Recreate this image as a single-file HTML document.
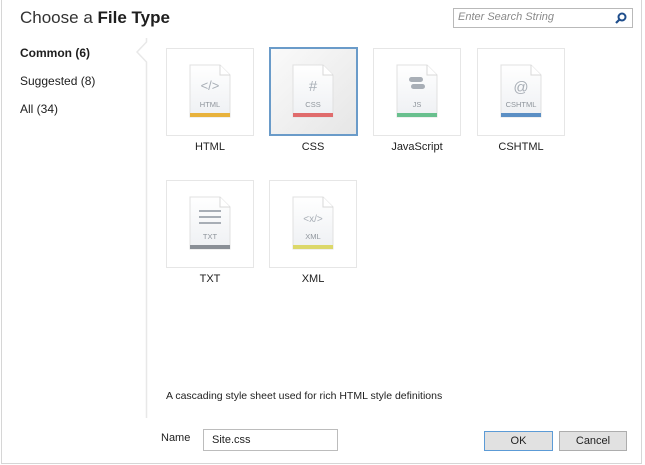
<!DOCTYPE html>
<html><head><meta charset="utf-8"><style>
*{margin:0;padding:0;box-sizing:border-box}
body{width:645px;height:465px;background:#fff;font-family:"Liberation Sans",sans-serif;color:#1e1e1e;position:relative;overflow:hidden}
.a{position:absolute}
.frame{left:1px;top:-2px;width:641px;height:466px;border:1px solid #d6d6d6}
.title{left:20px;top:8px;font-size:17px;color:#333}
.title b{color:#1e1e1e}
.nav{left:20px;font-size:12px}
.tile{width:88px;height:88px;border:1px solid #e6e6e6;background:#fff}
.tile.sel{border:2px solid #6a9bc9;background:linear-gradient(135deg,#fafafa,#e6e6e6)}
.lbl{font-size:11px;width:88px;text-align:center}
.search{left:453px;top:8px;width:180px;height:20px;border:1px solid #b9b9b9;font-size:11px;font-style:italic;color:#8a8a8a;padding:2px 4px}
.btn{height:20px;border:1px solid #adadad;background:#e1e1e1;font-size:11px;text-align:center;line-height:18px}
</style></head><body>
<div class="a frame"></div>
<div class="a title">Choose a <b>File Type</b></div>
<div class="a search">Enter Search String</div>
<svg class="a" style="left:614px;top:11px" width="14" height="14"><circle cx="8" cy="6" r="3.5" fill="none" stroke="#1f4e8c" stroke-width="2"/><line x1="5.5" y1="8.5" x2="2" y2="12" stroke="#1f4e8c" stroke-width="2.2"/></svg>
<div class="a nav" style="top:46px;font-weight:bold">Common (6)</div>
<div class="a nav" style="top:74px">Suggested (8)</div>
<div class="a nav" style="top:102px">All (34)</div>
<svg class="a" style="left:136px;top:38px" width="14" height="380"><path d="M10.5 0 L10.5 4 L1 14 L10.5 24 L10.5 380" fill="none" stroke="#e8e8e8" stroke-width="1.5"/></svg>

<div class="a tile" style="left:166px;top:48px"></div>
<div class="a tile sel" style="left:269px;top:47px;width:89px;height:89px"></div>
<div class="a tile" style="left:373px;top:48px"></div>
<div class="a tile" style="left:477px;top:48px"></div>
<div class="a tile" style="left:166px;top:180px"></div>
<div class="a tile" style="left:269px;top:180px"></div>

<svg class="a" style="left:0;top:0" width="645" height="300" font-family="Liberation Sans,sans-serif">
<defs><linearGradient id="p" x1="0" y1="0" x2="0" y2="1"><stop offset="0" stop-color="#fff"/><stop offset="1" stop-color="#eef0f3"/></linearGradient>
<g id="doc"><path d="M0 0 H30 L40 10 V52 H0 Z" fill="url(#p)" stroke="#e0e0e0"/><path d="M30 0 V10 H40" fill="#fff" stroke="#d8d8d8"/></g></defs>
<g transform="translate(190,65)"><use href="#doc"/><rect x="0" y="48" width="40" height="4" fill="#e8b23c"/><text x="20" y="25" font-size="13" fill="#a8aeb6" text-anchor="middle">&lt;/&gt;</text><text x="20" y="42" font-size="7.5" fill="#8f959c" text-anchor="middle">HTML</text></g>
<g transform="translate(293,65)"><use href="#doc"/><rect x="0" y="48" width="40" height="4" fill="#e06c6c"/><text x="20" y="26" font-size="15" fill="#a8aeb6" text-anchor="middle">#</text><text x="20" y="42" font-size="7.5" fill="#8f959c" text-anchor="middle">CSS</text></g>
<g transform="translate(397,65)"><use href="#doc"/><rect x="0" y="48" width="40" height="4" fill="#69c08e"/><rect x="12" y="12" width="14" height="5" rx="2.5" fill="#a8aeb6"/><rect x="14" y="19" width="14" height="5" rx="2.5" fill="#a8aeb6"/><text x="20" y="42" font-size="7.5" fill="#8f959c" text-anchor="middle">JS</text></g>
<g transform="translate(501,65)"><use href="#doc"/><rect x="0" y="48" width="40" height="4" fill="#5b8fc4"/><text x="20" y="27" font-size="15" fill="#a8aeb6" text-anchor="middle">@</text><text x="20" y="42" font-size="7.5" fill="#8f959c" text-anchor="middle">CSHTML</text></g>
<g transform="translate(190,197)"><use href="#doc"/><rect x="0" y="48" width="40" height="4" fill="#8a8f96"/><rect x="9" y="13" width="22" height="2" fill="#a8aeb6"/><rect x="9" y="19" width="22" height="2" fill="#a8aeb6"/><rect x="9" y="25" width="22" height="2" fill="#a8aeb6"/><text x="20" y="42" font-size="7.5" fill="#8f959c" text-anchor="middle">TXT</text></g>
<g transform="translate(293,197)"><use href="#doc"/><rect x="0" y="48" width="40" height="4" fill="#dcd86a"/><text x="20" y="25" font-size="10" fill="#a8aeb6" text-anchor="middle">&lt;x/&gt;</text><text x="20" y="42" font-size="7.5" fill="#8f959c" text-anchor="middle">XML</text></g>
</svg>

<div class="a lbl" style="left:166px;top:141px">HTML</div>
<div class="a lbl" style="left:269px;top:141px">CSS</div>
<div class="a lbl" style="left:373px;top:141px">JavaScript</div>
<div class="a lbl" style="left:477px;top:141px">CSHTML</div>
<div class="a lbl" style="left:166px;top:273px">TXT</div>
<div class="a lbl" style="left:269px;top:273px">XML</div>

<div class="a" style="left:166px;top:390px;font-size:10.5px">A cascading style sheet used for rich HTML style definitions</div>
<div class="a" style="left:161px;top:432px;font-size:11px">Name</div>
<div class="a" style="left:203px;top:429px;width:135px;height:22px;border:1px solid #bcbcbc;font-size:11px;padding:4px 8px">Site.css</div>
<div class="a btn" style="left:484px;top:431px;width:69px;border-color:#5c9bd6">OK</div>
<div class="a btn" style="left:559px;top:431px;width:68px">Cancel</div>
</body></html>
